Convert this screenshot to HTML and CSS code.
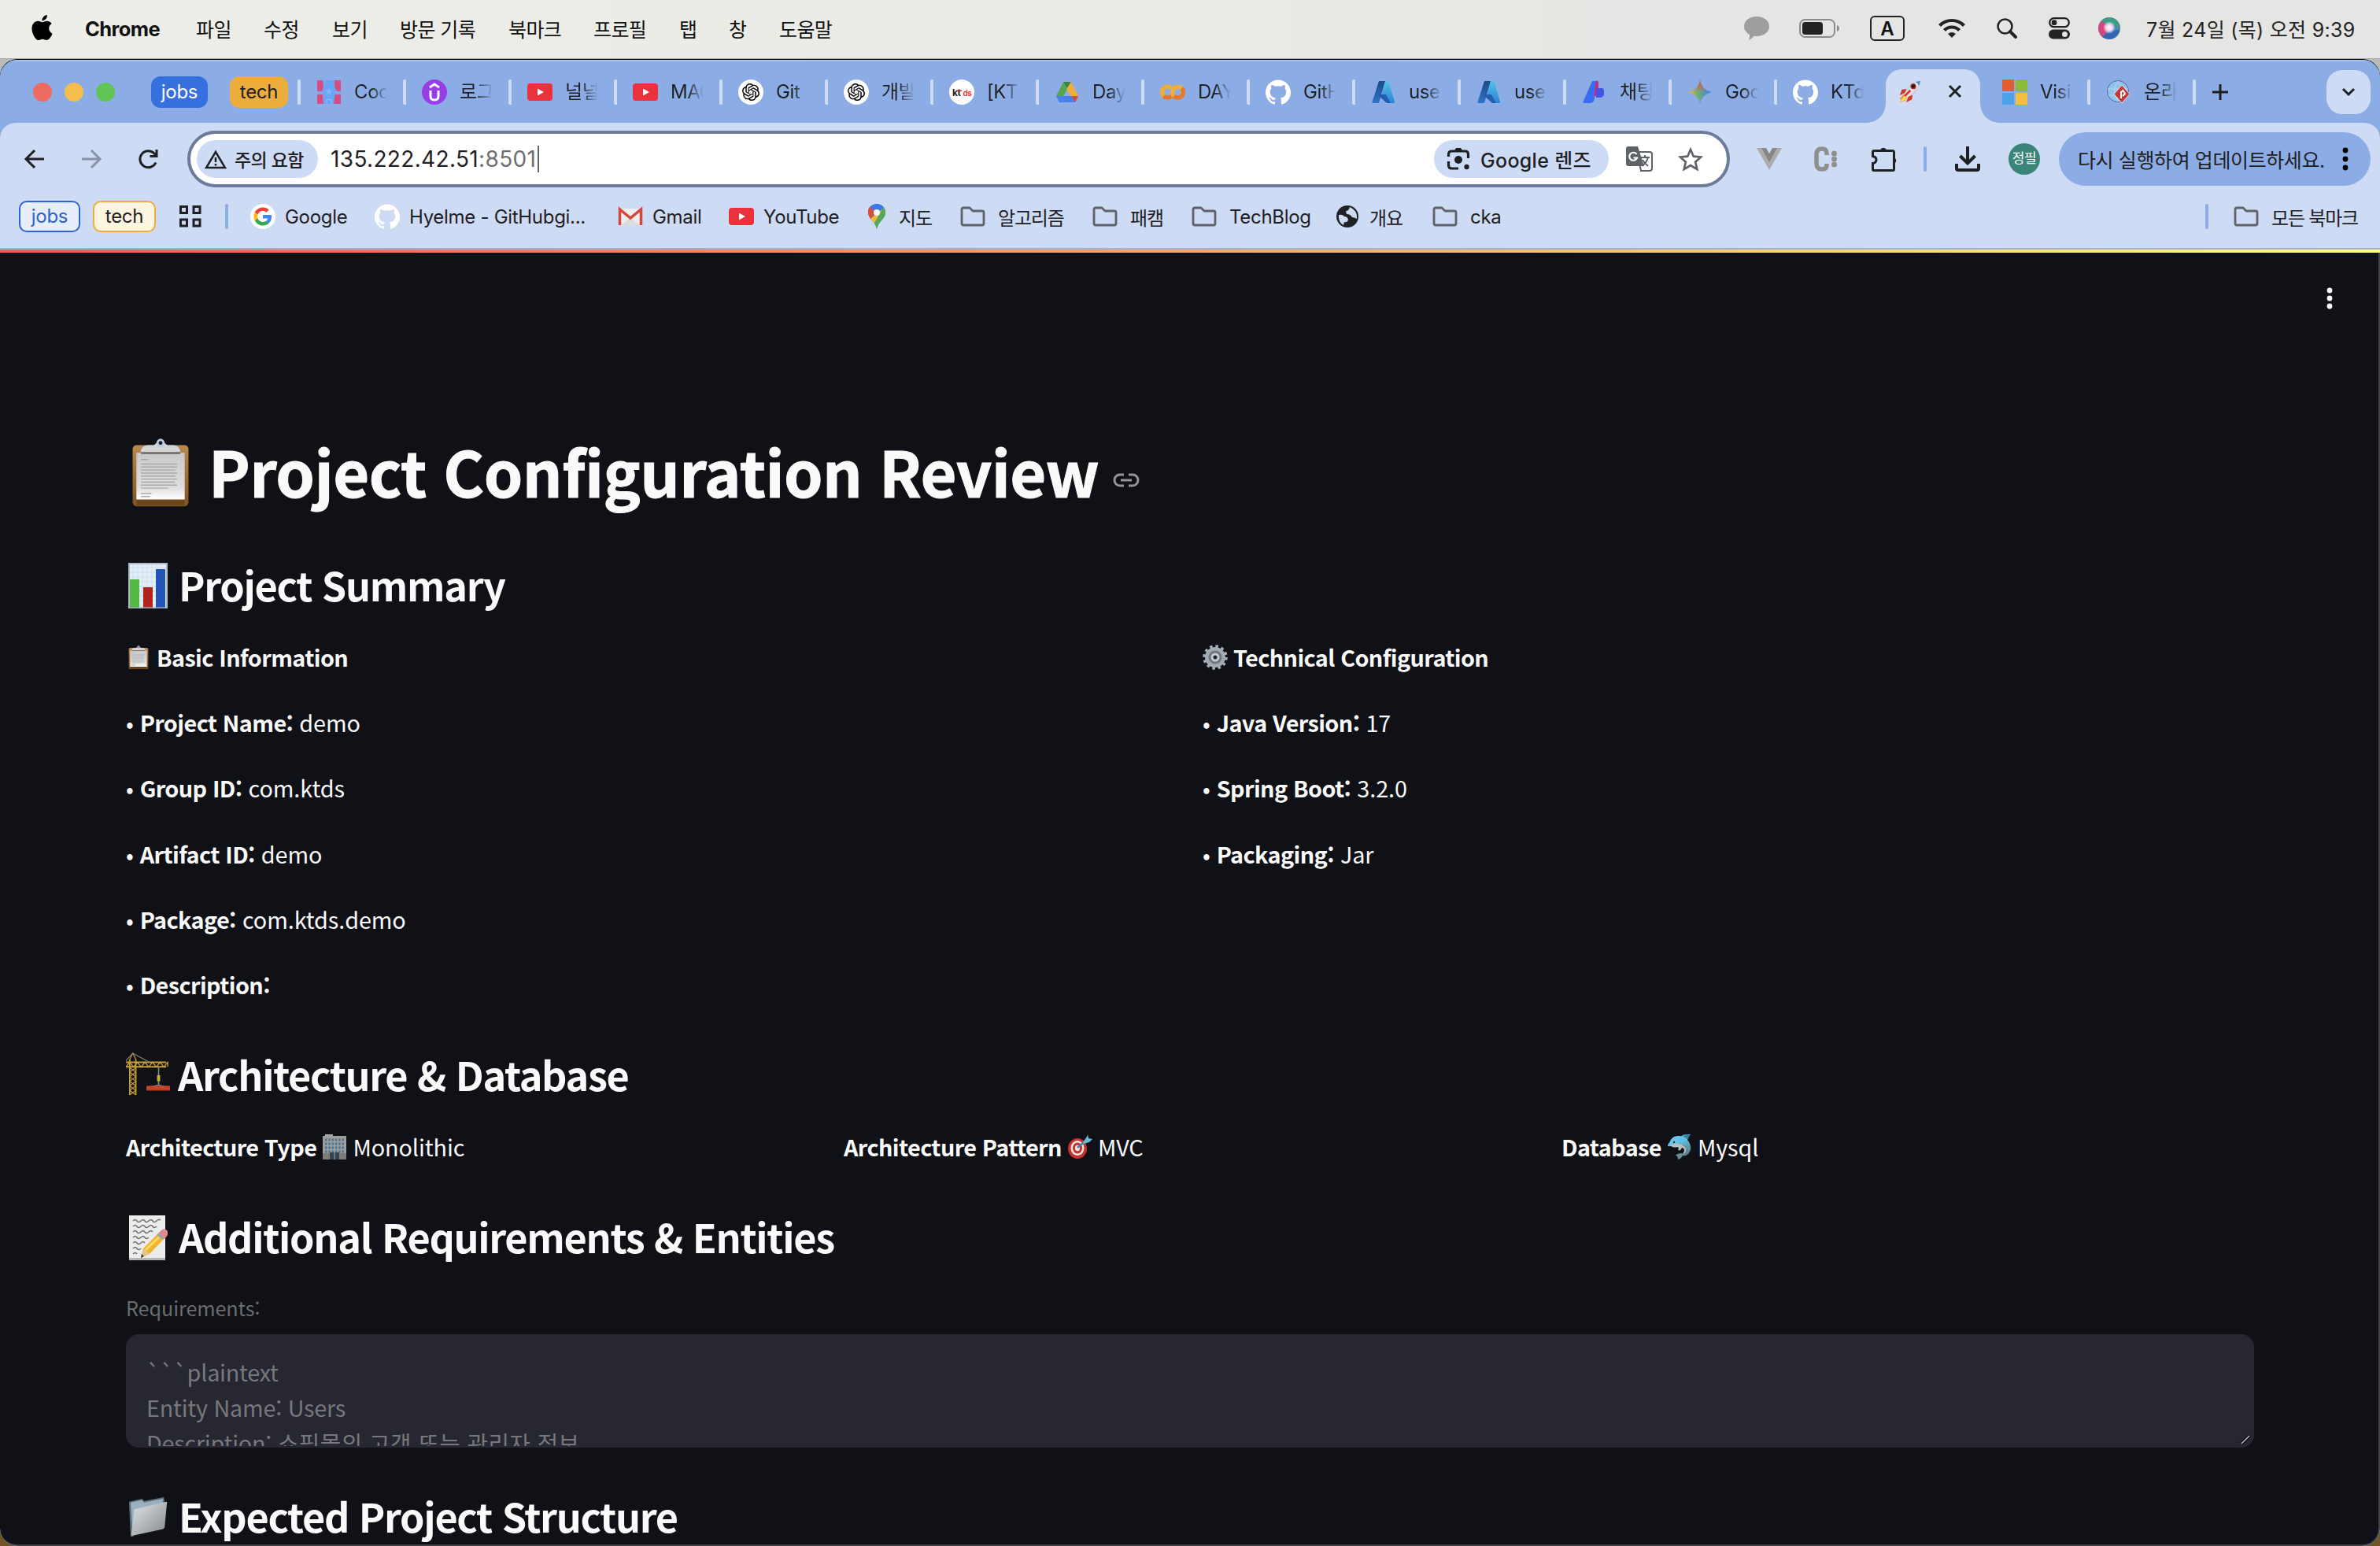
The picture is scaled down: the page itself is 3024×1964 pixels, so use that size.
FILE: index.html
```html
<!DOCTYPE html>
<html lang="ko">
<head>
<meta charset="utf-8">
<title>Project Configuration Review</title>
<link rel="stylesheet" href="styles.css">
</head>
<body>
<svg class="defs" aria-hidden="true">
  <defs>
    <linearGradient id="wood" x1="0" y1="0" x2="0" y2="1"><stop offset="0" stop-color="#b98a4b"/><stop offset="1" stop-color="#805424"/></linearGradient>
    <linearGradient id="paper" x1="0" y1="0" x2="0" y2="1"><stop offset="0" stop-color="#c9c9c9"/><stop offset=".75" stop-color="#dedede"/><stop offset="1" stop-color="#fff"/></linearGradient>
    <linearGradient id="folder" x1="0" y1="0" x2="1" y2="1"><stop offset="0" stop-color="#e2e5e7"/><stop offset="1" stop-color="#85898d"/></linearGradient>
    <linearGradient id="azure" x1="0" y1="0" x2="0" y2="1"><stop offset="0" stop-color="#4fc4e8"/><stop offset="1" stop-color="#2f7fd6"/></linearGradient>
    <linearGradient id="azureDark" x1="0" y1="0" x2="0" y2="1"><stop offset="0" stop-color="#1c4a86"/><stop offset="1" stop-color="#2f74c8"/></linearGradient>
    <linearGradient id="dolphin" x1="0" y1="0" x2=".6" y2="1"><stop offset="0" stop-color="#74d2f4"/><stop offset=".5" stop-color="#5fc0e6"/><stop offset="1" stop-color="#5d7f90"/></linearGradient>
    <radialGradient id="siri"><stop offset="0" stop-color="#fff"/><stop offset=".3" stop-color="#f0d4f0"/><stop offset=".6" stop-color="#fff" stop-opacity="0"/></radialGradient>
    <linearGradient id="gem" x1="0" y1="0" x2="1" y2="0"><stop offset="0" stop-color="#edbd3d"/><stop offset=".4" stop-color="#6fae72"/><stop offset="1" stop-color="#3c7df0"/></linearGradient>
    <linearGradient id="gemTop" x1="0" y1="0" x2="0" y2="1"><stop offset="0" stop-color="#ea4f3c"/><stop offset=".5" stop-color="#ea4f3c" stop-opacity="0"/></linearGradient>
    <linearGradient id="rocketBody" x1="0" y1="0" x2="1" y2="1"><stop offset="0" stop-color="#5596d8"/><stop offset=".5" stop-color="#eef3f7"/><stop offset="1" stop-color="#74828d"/></linearGradient>
  </defs>
  <symbol id="clipboard" viewBox="0 0 80 96">
    <rect x="3" y="12" width="74" height="81" rx="5" fill="url(#wood)"/>
    <rect x="8" y="84" width="64" height="8" fill="#6b451c"/>
    <rect x="8" y="22" width="64" height="62" fill="url(#paper)"/>
    <path d="M14 22v-3q1-6 9-7h8l5-4q4-4 8 0l5 4h8q8 1 9 7v3z" fill="#d3d5d8"/>
    <rect x="14" y="21" width="52" height="3" fill="#7b736c"/>
    <circle cx="40" cy="9" r="4" fill="#15202c" stroke="#b9cbdc" stroke-width="3"/>
    <path d="M14 31h10M14 37h48M14 41h48M14 45h46M14 49h48M14 53h46M14 57h48M14 61h45M14 65h48M14 69h36M14 76h14M14 80h12" stroke="#aaa" stroke-width="1.5"/>
  </symbol>
  <symbol id="chart" viewBox="0 0 50 58">
    <rect width="50" height="58" fill="#e3eef8"/>
    <path d="M0 6h50M0 12h50M0 18h50M0 24h50M0 30h50M0 36h50M0 42h50M0 48h50M0 54h50M6 0v58M12 0v58M18 0v58M24 0v58M30 0v58M36 0v58M42 0v58" stroke="#cddfed" stroke-width="1"/>
    <rect x="2" y="21" width="12" height="37" fill="#54b941"/><rect x="19" y="31" width="12" height="27" fill="#b3251c"/><rect x="35" y="8" width="12" height="50" fill="#2454b8"/>
    <rect x="1" y="1" width="48" height="56" fill="none" stroke="#9cabb8" stroke-width="1.5"/>
  </symbol>
  <symbol id="gear" viewBox="0 0 64 64">
    <circle cx="32" cy="32" r="28" fill="none" stroke="#a8b1ba" stroke-width="7" stroke-dasharray="7 7.66"/>
    <circle cx="32" cy="32" r="21" fill="none" stroke="#a2abb3" stroke-width="10"/>
    <circle cx="32" cy="32" r="17" fill="#70777e"/>
    <circle cx="32" cy="32" r="11" fill="#c3cad0"/><circle cx="32" cy="32" r="5" fill="#23272c"/>
  </symbol>
  <symbol id="crane" viewBox="0 0 58 56">
    <g fill="none" stroke="#c79e3a">
      <path d="M5 9v47M13 9v47" stroke-width="1.800"/>
      <path d="M5 20l8 6-8 6 8 6-8 6 8 6-8 6M13 20l-8 6 8 6-8 6 8 6-8 6 8 6M5 9l4-8 4 8" stroke-width="1.2"/>
      <path d="M0 13h53M0 19h53" stroke-width="2"/>
      <path d="M0 19l5-6 5 6 5-6 5 6 5-6 5 6 5-6 5 6 5-6 5 6 5-6v6" stroke-width="1.4"/>
    </g>
    <path d="M9 1L0 11M9 1l22 12" stroke="#82807a" stroke-width="1.2" fill="none"/>
    <path d="M43 20v12M43 38v5l-12 3M43 43l11 3" stroke="#8a8d90" stroke-width="1.6" fill="none"/>
    <rect x="41" y="30" width="4" height="8" fill="#c7b33b"/><rect x="27" y="44" width="31" height="6" fill="#c2452a"/><path d="M28 50h29" stroke="#7e2a1a"/>
  </symbol>
  <symbol id="building" viewBox="0 0 32 32">
    <rect x="4" y="0" width="10" height="4" fill="#a7a7a5"/><rect x="1" y="2" width="30" height="30" fill="#a09e9a"/>
    <path d="M4 7h24M4 12h24M4 17h24M4 22h24" stroke="#44739c" stroke-width="3" stroke-dasharray="2.5 1.8"/>
    <rect x="1" y="24" width="30" height="8" fill="#7d7c7a"/><rect x="10" y="23" width="12" height="9" fill="#344452"/><path d="M16 23v9" stroke="#98a6b2"/>
  </symbol>
  <symbol id="target" viewBox="0 0 32 32">
    <ellipse cx="13" cy="18" rx="12" ry="13" fill="#c7312e"/><ellipse cx="13" cy="17.5" rx="8.5" ry="9.5" fill="#f0e9e6"/><ellipse cx="13" cy="17.5" rx="6" ry="7" fill="#c7312e"/><ellipse cx="13" cy="17.5" rx="3" ry="3.8" fill="#f0e9e6"/>
    <path d="M13 17L26 6" stroke="#3b8ba0" stroke-width="2.5"/><path d="M20 10l5-7 1-3 1 5 5 1-4 4-7 2z" fill="#64bcd0"/>
  </symbol>
  <symbol id="dolphin-mark" viewBox="0 0 32 32">
    <path d="M1 15C1 12 3 11 4 9 6 4 11 1 18 2.500 21 0 26 0 30 0c-2 2-3 5-4 7 5 6 6 13 1 18-3 3-7 3-8 1 1-3 5-5 4-10-2-3-6-4-10-4-4 2-8 4-12 3z" fill="url(#dolphin)"/>
    <path d="M4 14c5-3 14-3 18 1 4 4 2 9-2 11 3-4 3-8-1-9-1 3-3 4-5 3 1-1 1-3 0-4-3 1-7 1-10-2z" fill="#b9bfbd"/>
    <path d="M19 24c-3 0-7 1-8 3 2 0 3 2 3 5 3-1 6-3 6-6z" fill="#6d8c9a"/><path d="M20 2q5-2 10-2-2 2-4 6z" fill="#2d7fa6"/>
    <circle cx="9" cy="10" r="1.2" fill="#0f2530"/>
  </symbol>
  <symbol id="memo" viewBox="0 0 50 58">
    <rect x="1" y="1" width="46" height="56" fill="#ececec"/><rect x="1" y="55" width="46" height="3" fill="#b5b5b5"/>
    <path d="M6 8q3-3 5 0t5 0 5 0 5 0 5 0 5 0 5-1M6 15q3-3 5 0t5 0 5 0 5 0 5 0 5 0M6 22q3-3 5 0t5 0 5 0 5 0 5 0M6 29q3-3 5 0t5 0 5 0 5 0M6 36q3-3 5 0t5 0 5 0M6 43q3-3 5 0t5 0M6 50q3-3 5 0" fill="none" stroke="#6f6f6f" stroke-width="1.5"/>
    <path d="M16 55l3-12 22-22 8 6-22 23z" fill="#efb52a"/><path d="M22 45l22-21" stroke="#fadb62" stroke-width="3"/>
    <path d="M16 55l3-12 8 7z" fill="#e5c393"/><path d="M16 55l1-5 3 3z" fill="#333"/><path d="M38 24l5-5q3-2 6 1t1 6l-4 5z" fill="#e08990"/><path d="M37 25l8 6" stroke="#9aa4aa" stroke-width="3"/>
  </symbol>
  <symbol id="files" viewBox="0 0 52 52">
    <path d="M1 6l17-4 3 3L47 0l1 6L6 52H3z" fill="#5e6f7d"/><path d="M3 7l15-3 3 3 25-5-1 9L10 17 6 48z" fill="#9db0bf"/>
    <path d="M8 16L50 6q2 0 1 2l-3 32-2 2L5 51q-1 0-1-2z" fill="url(#folder)"/>
  </symbol>
  <symbol id="rocket" viewBox="0 0 32 32">
    <path d="M12 12l-7 1-3 8 7-3zM20 20l-1 7-8 4 3-8z" fill="#d13a22"/>
    <path d="M8 19l-6 7 2 1-2 4 6-2 5-5z" fill="#f08b25"/><path d="M9 21l-4 5-2 4 5-2 4-4z" fill="#ffe25a"/>
    <path d="M31 1c-8 0-15 4-19 11l-4 8 4 4 8-4c8-5 11-12 11-19z" fill="url(#rocketBody)"/>
    <path d="M31 1l-7 1q3 2 5 6z" fill="#4b88ca"/><circle cx="21" cy="8.500" r="4" fill="#b52a22"/><circle cx="21" cy="8.500" r="2.300" fill="#1a1617"/><path d="M9 22l8-8" stroke="#d6392b" stroke-width="3"/>
  </symbol>
  <symbol id="github" viewBox="0 0 24 24"><path d="M12 .297c-6.63 0-12 5.373-12 12 0 5.303 3.438 9.8 8.205 11.385.6.113.82-.258.82-.577 0-.285-.01-1.04-.015-2.04-3.338.724-4.042-1.61-4.042-1.61C4.422 18.07 3.633 17.7 3.633 17.7c-1.087-.744.084-.729.084-.729 1.205.084 1.838 1.236 1.838 1.236 1.07 1.835 2.809 1.305 3.495.998.108-.776.417-1.305.76-1.605-2.665-.3-5.466-1.332-5.466-5.93 0-1.31.465-2.38 1.235-3.22-.135-.303-.54-1.523.105-3.176 0 0 1.005-.322 3.3 1.23.96-.267 1.98-.399 3-.405 1.02.006 2.04.138 3 .405 2.28-1.552 3.285-1.23 3.285-1.23.645 1.653.24 2.873.12 3.176.765.84 1.23 1.91 1.23 3.22 0 4.61-2.805 5.625-5.475 5.92.42.36.81 1.096.81 2.22 0 1.606-.015 2.896-.015 3.286 0 .315.21.69.825.57C20.565 22.092 24 17.592 24 12.297c0-6.627-5.373-12-12-12" fill="#fff"/></symbol>
  <symbol id="youtube" viewBox="0 0 32 32"><rect y="5" width="32" height="22" rx="4" fill="#ea323c"/><path d="M13 11.500v9l8-4.500z" fill="#fff"/></symbol>
  <symbol id="openai" viewBox="0 0 32 32"><circle cx="16" cy="16" r="16" fill="#fff"/><path transform="translate(5 5) scale(.917)" d="M22.2819 9.8211a5.9847 5.9847 0 0 0-.5157-4.9108 6.0462 6.0462 0 0 0-6.5098-2.9A6.0651 6.0651 0 0 0 4.9807 4.1818a5.9847 5.9847 0 0 0-3.9977 2.9 6.0462 6.0462 0 0 0 .7427 7.0966 5.98 5.98 0 0 0 .511 4.9107 6.051 6.051 0 0 0 6.5146 2.9001A5.9847 5.9847 0 0 0 13.2599 24a6.0557 6.0557 0 0 0 5.7718-4.2058 5.9894 5.9894 0 0 0 3.9977-2.9001 6.0557 6.0557 0 0 0-.7475-7.0729zm-9.022 12.6081a4.4755 4.4755 0 0 1-2.8764-1.0408l.1419-.0804 4.7783-2.7582a.7948.7948 0 0 0 .3927-.6813v-6.7369l2.02 1.1686a.071.071 0 0 1 .038.052v5.5826a4.504 4.504 0 0 1-4.4945 4.4944zm-9.6607-4.1254a4.4708 4.4708 0 0 1-.5346-3.0137l.142.0852 4.783 2.7582a.7712.7712 0 0 0 .7806 0l5.8428-3.3685v2.3324a.0804.0804 0 0 1-.0332.0615L9.74 19.9502a4.4992 4.4992 0 0 1-6.1408-1.6464zM2.3408 7.8956a4.485 4.485 0 0 1 2.3655-1.9728V11.6a.7664.7664 0 0 0 .3879.6765l5.8144 3.3543-2.0201 1.1685a.0757.0757 0 0 1-.071 0l-4.8303-2.7865A4.504 4.504 0 0 1 2.3408 7.872zm16.5963 3.8558L13.1038 8.364 15.1192 7.2a.0757.0757 0 0 1 .071 0l4.8303 2.7913a4.4944 4.4944 0 0 1-.6765 8.1042v-5.6772a.79.79 0 0 0-.407-.667zm2.0107-3.0231l-.142-.0852-4.7735-2.7818a.7759.7759 0 0 0-.7854 0L9.409 9.2297V6.8974a.0662.0662 0 0 1 .0284-.0615l4.8303-2.7866a4.4992 4.4992 0 0 1 6.6802 4.66zM8.3065 12.863l-2.02-1.1638a.0804.0804 0 0 1-.038-.0567V6.0742a4.4992 4.4992 0 0 1 7.3757-3.4537l-.142.0805L8.704 5.459a.7948.7948 0 0 0-.3927.6813zm1.0976-2.3654l2.602-1.4998 2.6069 1.4998v2.9994l-2.5974 1.4997-2.6067-1.4997Z"/></symbol>
  <symbol id="azure-mark" viewBox="0 0 32 32"><path d="M10 2h8L10 30H2q-1 0-.500-1.500z" fill="url(#azureDark)"/><path d="M18 2h3q1 0 1.500 1.500L30 28q.5 2-1.500 2H21l-7-12z" fill="url(#azure)"/><path d="M8 19h11l6 11h-5z" fill="#245fae"/></symbol>
  <symbol id="folder-mark" viewBox="0 0 32 28"><path d="M4 3h8l4 4h12q2 0 2 2v14q0 2-2 2H4q-2 0-2-2V5q0-2 2-2z" fill="none" stroke="#5f6368" stroke-width="2.800" stroke-linejoin="round"/></symbol>
</svg>

<header class="menubar">
  <nav class="menus">
    <svg width="27" height="32" viewBox="2 0 20 24"><path d="M12.152 6.896c-.948 0-2.415-1.078-3.96-1.04-2.04.027-3.91 1.183-4.961 3.014-2.117 3.675-.546 9.103 1.519 12.09 1.013 1.454 2.208 3.09 3.792 3.039 1.52-.065 2.09-.987 3.935-.987 1.831 0 2.35.987 3.96.948 1.637-.026 2.676-1.48 3.676-2.948 1.156-1.688 1.636-3.325 1.662-3.415-.039-.013-3.182-1.221-3.22-4.857-.026-3.04 2.48-4.494 2.597-4.559-1.429-2.09-3.623-2.324-4.39-2.376-2-.156-3.675 1.09-4.61 1.09zM15.53 3.83c.843-1.012 1.4-2.427 1.245-3.83-1.207.052-2.662.805-3.532 1.818-.78.896-1.454 2.338-1.273 3.714 1.338.104 2.715-.688 3.559-1.701"/></svg>
    <b>Chrome</b><span>파일</span><span>수정</span><span>보기</span><span>방문 기록</span><span>북마크</span><span>프로필</span><span>탭</span><span>창</span><span>도움말</span>
  </nav>
  <div class="status">
    <svg width="32" height="32" viewBox="0 0 32 32"><path d="M16 1c9 0 16 5 16 12.500S25 26 16 26q-2 0-3.500-.3Q10 29 6 31q1.500-4 1-7Q0 20 0 13.500C0 6 7 1 16 1z" fill="#9e9e9e"/></svg>
    <svg width="52" height="26" viewBox="0 0 52 26"><rect x="1" y="2" width="44" height="22" rx="6.500" fill="none" stroke="#8b8b8a" stroke-width="2"/><rect x="4" y="5" width="26" height="16" rx="3.500" fill="#232323"/><path d="M48 9q3 1 3 4t-3 4z" fill="#8b8b8a"/></svg>
    <span class="ime">A</span>
    <svg width="34" height="26" viewBox="0 0 34 26" fill="none" stroke="#232323" stroke-width="4.200"><path d="M1.500 9.500Q8 3 17 3t15.500 6.500M7.500 15.500Q11 11.500 17 11.500t9.500 4"/><path d="M17 25l-5-5q5-4 10 0z" fill="#232323" stroke="none"/></svg>
    <svg width="26" height="26" viewBox="0 0 26 26" fill="none" stroke="#232323"><circle cx="10.500" cy="10.500" r="9" stroke-width="2.600"/><path d="M17 17l7 7" stroke-width="4" stroke-linecap="round"/></svg>
    <svg width="27" height="28" viewBox="0 0 27 28"><rect x="1.200" y="1.200" width="24.600" height="11" rx="5.500" fill="none" stroke="#232323" stroke-width="2.300"/><circle cx="7" cy="6.700" r="3.400" fill="#232323"/><rect y="15.500" width="27" height="12" rx="6" fill="#232323"/><circle cx="20.500" cy="21.500" r="3.500" fill="#e5e5e3"/></svg>
    <svg width="28" height="28" viewBox="0 0 28 28"><circle cx="14" cy="14" r="14" fill="#4a86a8"/><path d="M3 6Q9-1 17 .500q9 2 11 13-6-5-12-3T3 6z" fill="#3f9c83"/><path d="M1 18Q-1 9 4 5q9 4 9 10-4 7-8 10-3-3-4-7z" fill="#d5467c"/><path d="M5 25q8-9 22-9-2 8-9 11-7 2-13-2z" fill="#3166b4"/><circle cx="14" cy="13" r="13" fill="url(#siri)"/></svg>
    <time>7월 24일 (목) 오전 9:39</time>
  </div>
</header>

<div class="window">
  <div class="tabstrip">
    <div class="lights"><i class="red"></i><i class="amber"></i><i class="green"></i></div>
    <span class="group group-jobs">jobs</span><span class="group group-tech">tech</span>
    <div class="tabs">
      <div class="tab"><svg viewBox="0 0 32 32"><path d="M1 1h30v30H1z" fill="#7da7ee"/><path d="M1 1h7q2 10-1 14H1zM31 1h-8q-1 10 3 14h5zM1 19h7l1 12H1zM31 19h-8l-1 12h9z" fill="#d64d82"/><path d="M11 1h10l3 15-2 15H10L8 16z" fill="#67a5f6"/><path d="M16 10l1.500 3.500 3.500.5-3 2 1 4-3-2-3 2 1-4-3-2 3.500-.5z" fill="#8ab5ee"/><path d="M13 31v-5q3-2 6 0v5" fill="none" stroke="#9bc0f5"/></svg><span>Coo</span></div>
      <div class="tab"><svg viewBox="0 0 32 32"><circle cx="16" cy="16" r="16" fill="#963ee4"/><path d="M10 10l6-4 6 4M11 14v7q0 5 5 5t5-5v-7" fill="none" stroke="#fff" stroke-width="3"/></svg><span>로그</span></div>
      <div class="tab"><svg><use href="#youtube"/></svg><span>널널</span></div>
      <div class="tab"><svg><use href="#youtube"/></svg><span>MAC</span></div>
      <div class="tab"><svg><use href="#openai"/></svg><span>Git</span></div>
      <div class="tab"><svg><use href="#openai"/></svg><span>개발</span></div>
      <div class="tab"><svg class="ktds" viewBox="0 0 32 32"><circle cx="16" cy="16" r="16" fill="#fff"/><text x="4" y="20.500" font-size="12" font-weight="700" fill="#222">kt</text><text x="17.500" y="20.500" font-size="10" font-weight="600" fill="#e0302f">ds</text><path d="M9 14h7" stroke="#e0302f" stroke-width="1.500"/></svg><span>[KT</span></div>
      <div class="tab"><svg viewBox="0 0 32 32"><path d="M11 3h10l-5 9z" fill="#3a8443"/><path d="M11 3l5 9-9 17-5-8z" fill="#55a553"/><path d="M21 3l9 18H20l-5-9z" fill="#edae3b"/><path d="M2 21h28l-4 8H6z" fill="#4a80ec"/><path d="M22 21h8l-4 8z" fill="#dc4a36"/></svg><span>Day</span></div>
      <div class="tab"><svg viewBox="0 0 32 32" fill="none" stroke-width="5.500"><path d="M14.500 11a7 7 0 1 0 0 10" stroke="#edae3b"/><path d="M4.500 21a7 7 0 0 0 10 0" stroke="#de7a32"/><circle cx="22.500" cy="16" r="6.700" stroke="#edae3b"/><path d="M17.500 21a7 7 0 0 0 10-10" stroke="#de7a32"/></svg><span>DAY</span></div>
      <div class="tab"><svg><use href="#github"/></svg><span>GitH</span></div>
      <div class="tab"><svg><use href="#azure-mark"/></svg><span>use</span></div>
      <div class="tab"><svg><use href="#azure-mark"/></svg><span>use</span></div>
      <div class="tab"><svg viewBox="0 0 32 32"><path d="M17 2q4-2 4 3v15l-6 2z" fill="#b8307e"/><path d="M13 2h5q-3 12-2 22-1 6-6 6H2q-1 0 0-3z" fill="#3a6cf2"/><path d="M19 11h6q3 0 3 4v4q-1 4-6 4h-4z" fill="#3f55e8"/></svg><span>채팅</span></div>
      <div class="tab"><svg viewBox="0 0 32 32"><path d="M16 1q2 12 15 15-13 3-15 15Q14 19 1 16 14 13 16 1z" fill="url(#gem)"/><path d="M16 1q2 12 15 15-13 3-15 15Q14 19 1 16 14 13 16 1z" fill="url(#gemTop)"/></svg><span>Goo</span></div>
      <div class="tab"><svg><use href="#github"/></svg><span>KTd</span></div>
      <div class="tab active"><svg class="rocket"><use href="#rocket"/></svg><svg class="close" viewBox="0 0 18 18"><path d="M2 2l14 14M16 2L2 16" stroke="#1f2023" stroke-width="3"/></svg></div>
      <div class="tab plain"><svg viewBox="0 0 32 32"><path d="M0 0h15v15H0z" fill="#e25d34"/><path d="M17 0h15v15H17z" fill="#8ebb35"/><path d="M0 17h15v15H0z" fill="#4ba2eb"/><path d="M17 17h15v15H17z" fill="#f5bd42"/></svg><span>Visi</span></div>
      <div class="tab"><svg viewBox="0 0 32 32"><circle cx="15" cy="15" r="13.500" fill="#8fc2ec" stroke="#4c6f9b"/><path d="M2 12h26M3 20h24M15 2q-9 13 0 26M15 2q9 13 0 26" fill="none" stroke="#b5d6f3"/><path d="M20 7l10 11.500L20 30 10 18.500z" fill="#bf3a38" stroke="#f1e4e6"/><path d="M19 24v-8l2.500-2 2.500 4-3 3" fill="none" stroke="#fff" stroke-width="2"/></svg><span>온라</span></div>
      <div class="tab end"></div>
    </div>
    <svg class="plus" width="22" height="22" viewBox="0 0 22 22"><path d="M11 1v20M1 11h20" stroke="#1f2023" stroke-width="3"/></svg>
    <div class="tabsearch"><svg width="18" height="12" viewBox="0 0 18 12"><path d="M2 2l7 7 7-7" fill="none" stroke="#1f2023" stroke-width="3"/></svg></div>
  </div>

  <div class="toolbar">
    <div class="nav">
      <svg viewBox="0 0 32 32"><path d="M28 16H6M16 5L5 16l11 11" fill="none" stroke="#1f2023" stroke-width="3"/></svg>
      <svg viewBox="0 0 32 32"><path d="M4 16h22M16 5l11 11-11 11" fill="none" stroke="#8792a6" stroke-width="3"/></svg>
      <svg viewBox="0 0 32 32"><path d="M26 20.500A10.500 10.500 0 1 1 24 9l3 3M27 4v8.500h-8.500" fill="none" stroke="#1f2023" stroke-width="3"/></svg>
    </div>
    <div class="omnibox">
      <span class="warn"><svg width="28" height="25" viewBox="0 0 28 25"><path d="M14 3L26 23H2z" fill="none" stroke="#1f2023" stroke-width="2.500"/><path d="M14 10v6M14 18v2.500" stroke="#1f2023" stroke-width="2.500"/></svg><b>주의 요함</b></span>
      <span class="url">135.222.42.51<em>:8501</em></span><i class="caret"></i>
      <span class="lens"><svg width="30" height="30" viewBox="0 0 30 30" fill="none" stroke="#1f2023" stroke-width="3.200"><path d="M2.500 12V9q0-4 4-4h17q4 0 4 4v5M2.500 18v5q0 4 4 4H15"/><circle cx="15" cy="16" r="5" fill="#1f2023" stroke="none"/><circle cx="25.500" cy="25" r="3.200" fill="#1f2023" stroke="none"/><path d="M10 4l2-3h6l2 3z" fill="#1f2023" stroke="none"/></svg><b>Google 렌즈</b></span>
      <svg class="translate" width="34" height="34" viewBox="0 0 34 34"><path d="M14 8h16q3 0 3 3v18q0 3-3 3H19z" fill="#fff" stroke="#5f6368" stroke-width="2"/><path d="M3 1h12l8 25H3q-3 0-3-3V4q0-3 3-3z" fill="#5f6368"/><path d="M13.500 11A5 5 0 1 0 14 15.500H9.500" fill="none" stroke="#fff" stroke-width="2.200"/><path d="M18 15h12M24 12v3M28 15q-2 7-8 11M21 18q3 5 7 8" stroke="#5f6368" stroke-width="2" fill="none"/></svg>
      <svg class="star" width="32" height="30" viewBox="0 0 32 30"><path d="M16 3l3.800 8.700 9.400.8-7.100 6.200 2.200 9.300L16 23l-8.300 5 2.200-9.300-7.100-6.200 9.400-.8z" fill="none" stroke="#5f6368" stroke-width="2.700"/></svg>
    </div>
    <div class="extensions">
      <svg width="32" height="28" viewBox="0 0 32 28"><path d="M0 0h7l9 16 9-16h7L16 28z" fill="#acacac"/><path d="M6 0h6l4 7 4-7h6L16 18z" fill="#878787"/></svg>
      <svg width="30" height="32" viewBox="0 0 30 32"><path d="M16 11V9q0-6-6-6-7 0-7 7v12q0 7 7 7 6 0 6-5v-2" fill="none" stroke="#8f8f8f" stroke-width="5.500"/><g fill="#8f8f8f"><circle cx="25.500" cy="9" r="3.500"/><circle cx="25.500" cy="16" r="3.500"/><circle cx="25.500" cy="23" r="3.500"/></g></svg>
      <svg width="34" height="34" viewBox="0 0 34 34"><path d="M4.500 6.500h23q2 0 2 2V30q0 1.500-1.500 1.500H4q-1.500 0-1.500-1.500v-7.500c6-1 6-8 0-9V8q0-1.500 2-1.500z" fill="none" stroke="#1f2023" stroke-width="3"/><path d="M12 6a4.300 4.300 0 0 1 8 0zM29 15a4.300 4.300 0 0 1 0 8z" fill="#1f2023" stroke="#1f2023"/></svg>
      <i class="divider"></i>
      <svg width="32" height="32" viewBox="0 0 32 32"><path d="M16 0v19M6.500 12L16 21.500 25.500 12M2 22v6q0 2 2 2h24q2 0 2-2v-6" fill="none" stroke="#1f2023" stroke-width="4"/></svg>
      <span class="avatar">정필</span>
    </div>
    <div class="relaunch"><span>다시 실행하여 업데이트하세요.</span><svg width="8" height="30" viewBox="0 0 8 30"><circle cx="4" cy="4" r="3.400"/><circle cx="4" cy="15" r="3.400"/><circle cx="4" cy="26" r="3.400"/></svg></div>
  </div>

  <div class="bookmarks">
    <span class="chip chip-jobs">jobs</span><span class="chip chip-tech">tech</span>
    <svg class="apps" width="30" height="30" viewBox="0 0 30 30" fill="none" stroke="#1f2023" stroke-width="3"><path d="M2.500 2.500h8v8h-8zM19 2.500h8v8h-8zM2.500 19h8v8h-8zM19 19h8v8h-8z"/></svg>
    <i class="divider"></i>
    <div class="links">
      <a><svg viewBox="0 0 32 32"><circle cx="16" cy="16" r="16" fill="#fff"/><g transform="translate(4.500 4.500) scale(.48)"><path fill="#ea4335" d="M24 9.500c3.540 0 6.710 1.220 9.210 3.600l6.850-6.850C35.900 2.380 30.470 0 24 0 14.620 0 6.510 5.380 2.560 13.220l7.980 6.190C12.430 13.720 17.740 9.500 24 9.500z"/><path fill="#4285f4" d="M46.980 24.550c0-1.570-.15-3.090-.38-4.550H24v9.020h12.940c-.58 2.960-2.260 5.480-4.780 7.180l7.730 6c4.510-4.180 7.090-10.360 7.090-17.650z"/><path fill="#fbbc05" d="M10.530 28.590c-.48-1.450-.76-2.990-.76-4.590s.27-3.140.76-4.590l-7.980-6.190C.92 16.460 0 20.120 0 24c0 3.880.92 7.540 2.560 10.780l7.970-6.190z"/><path fill="#34a853" d="M24 48c6.480 0 11.930-2.130 15.890-5.810l-7.730-6c-2.150 1.450-4.920 2.300-8.160 2.300-6.260 0-11.570-4.220-13.470-9.910l-7.980 6.190C6.510 42.620 14.620 48 24 48z"/></g></svg>Google</a>
      <a><svg><use href="#github"/></svg>Hyelme - GitHubgi...</a>
      <a><svg viewBox="0 0 32 32"><path d="M2 6h28v21H2z" fill="#eee"/><path d="M4 27l12-9 12 9z" fill="#dcdcdc"/><path d="M2.500 27V7L16 18 29.500 7v20" fill="none" stroke="#d0493c" stroke-width="3.500"/></svg>Gmail</a>
      <a><svg><use href="#youtube"/></svg>YouTube</a>
      <a class="ko"><svg viewBox="0 0 32 32"><path d="M16 0q11 1 11 11c0 8-9 11-11 21C14 22 5 19 5 11Q5 1 16 0z" fill="#55a859"/><path d="M7 4Q11 0 16 0q6 0 9 5l-9 8z" fill="#3e78e6"/><path d="M7 4l8 7-7 8q-3-4-3-8 0-5 2-7z" fill="#dc4a38"/><path d="M8 19L24 6l-5 12-6 7z" fill="#f0b93b"/><path d="M24 5q3 2 3 6c0 8-9 11-11 21-1-4-2-6-3-8z" fill="#55a859"/><circle cx="16" cy="11" r="4" fill="#fff"/></svg>지도</a>
      <a class="dir ko"><svg><use href="#folder-mark"/></svg>알고리즘</a>
      <a class="dir ko"><svg><use href="#folder-mark"/></svg>패캠</a>
      <a class="dir"><svg><use href="#folder-mark"/></svg>TechBlog</a>
      <a class="ko"><svg viewBox="0 0 32 32"><circle cx="16" cy="16" r="14" fill="#202124"/><path d="M5 14q5-1 7 2 4 0 5 4-1 4-5 3l-1 4q-7-4-6-13zM19 4q-1 5-5 5l1 4q5 0 7 4 3 0 6 2 1-11-9-15z" fill="#cedbf5"/></svg>개요</a>
      <a class="dir"><svg><use href="#folder-mark"/></svg>cka</a>
    </div>
    <div class="all"><i class="divider"></i><a class="dir ko"><svg><use href="#folder-mark"/></svg>모든 북마크</a></div>
  </div>

  <main class="page">
    <svg class="kebab" width="8" height="28" viewBox="0 0 8 28" fill="#fafafa"><circle cx="4" cy="4" r="3.400"/><circle cx="4" cy="14" r="3.400"/><circle cx="4" cy="24" r="3.400"/></svg>
    <h1><svg class="emoji"><use href="#clipboard"/></svg><span>Project Configuration Review</span><svg class="anchor" width="34" height="18" viewBox="0 0 34 18"><path d="M14 2H9a7 7 0 0 0 0 14h5M20 2h5a7 7 0 0 1 0 14h-5M10 9h14" fill="none" stroke="#94959a" stroke-width="3"/></svg></h1>
    <h3 class="summary"><svg class="emoji"><use href="#chart"/></svg><span>Project Summary</span></h3>
    <div class="two">
      <section>
        <p><svg class="emoji clip"><use href="#clipboard"/></svg><b>Basic Information</b></p>
        <p>• <b>Project Name:</b> demo</p>
        <p>• <b>Group ID:</b> com.ktds</p>
        <p>• <b>Artifact ID:</b> demo</p>
        <p>• <b>Package:</b> com.ktds.demo</p>
        <p>• <b>Description:</b></p>
      </section>
      <section>
        <p><svg class="emoji cog"><use href="#gear"/></svg><b>Technical Configuration</b></p>
        <p>• <b>Java Version:</b> 17</p>
        <p>• <b>Spring Boot:</b> 3.2.0</p>
        <p>• <b>Packaging:</b> Jar</p>
      </section>
    </div>
    <h3 class="arch"><svg class="emoji crane"><use href="#crane"/></svg><span>Architecture &amp; Database</span></h3>
    <div class="three">
      <p><b>Architecture Type</b><svg class="emoji"><use href="#building"/></svg>Monolithic</p>
      <p><b>Architecture Pattern</b><svg class="emoji"><use href="#target"/></svg>MVC</p>
      <p><b>Database</b><svg class="emoji"><use href="#dolphin-mark"/></svg>Mysql</p>
    </div>
    <h3 class="reqs"><svg class="emoji"><use href="#memo"/></svg><span>Additional Requirements &amp; Entities</span></h3>
    <div class="label">Requirements:</div>
    <div class="textarea"><div class="content">```plaintext
Entity Name: Users
Description: <span class="ko">쇼핑몰의 고객 또는 관리자 정보</span></div><svg class="grip" width="14" height="14" viewBox="0 0 14 14"><path d="M2 12L12 2" stroke="#0a0a0c" stroke-width="4"/><path d="M2 12L12 2" stroke="#c8c8ca" stroke-width="1.500"/></svg></div>
    <h3 class="tree"><svg class="emoji"><use href="#files"/></svg><span>Expected Project Structure</span></h3>
  </main>
</div>
</body>
</html>
```
FILE: styles.css
```css
* { box-sizing: border-box; }

body {
  margin: 0;
  width: 3024px;
  height: 1964px;
  overflow: hidden;
  display: flex;
  flex-direction: column;
  background: linear-gradient(#b9bcbc 0 50%, #6f5426 50%);
  font-family: Inter, "Noto Sans CJK KR", sans-serif;
  color: #1f2023;
}

svg { display: block; flex: none; }
.defs { position: absolute; width: 0; height: 0; }
i, em { font-style: normal; display: inline-block; }

/* macOS menu bar */
.menubar {
  height: 75px;
  flex: none;
  display: flex;
  justify-content: space-between;
  padding: 0 32px 2px 40px;
  background: linear-gradient(90deg, #eeeee9, #ebebe6 45%, #e5e5e4 75%, #e5e5e4);
  border-bottom: 1px solid #a6a6a4;
  font-size: 25px;
  color: #111;
}
.menus {
  display: grid;
  grid-template-columns: 68px 141px 86px 87px 86px 138px 108px 109px 63px 64px auto;
  align-items: center;
  white-space: nowrap;
}
.menus span { letter-spacing: -0.6px; }
.menus svg { position: relative; top: -1px; }
.menus b { font-size: 25.500px; letter-spacing: -0.6px; }
.status {
  display: grid;
  grid-template-columns: 70px 90px 87px 74px 66px 63px 61px 265px;
  align-items: center;
}
.status time { white-space: nowrap; letter-spacing: 0.3px; color: #232323; }
.ime {
  width: 44px;
  height: 32px;
  border: 2px solid #232323;
  border-radius: 6px;
  font-size: 24px;
  font-weight: 600;
  line-height: 29px;
  text-align: center;
}

/* browser window */
.window {
  flex: 1;
  min-height: 0;
  display: flex;
  flex-direction: column;
  overflow: hidden;
  border-radius: 22px;
  border-top: 1px solid #000;
  background: #8cace5;
}
.tabstrip {
  height: 80px;
  flex: none;
  display: flex;
  align-items: center;
  border-top: 2px solid #a9c1ef;
  padding: 0 12px 0 42px;
}
.lights { display: flex; gap: 16px; width: 150px; }
.lights i { width: 24px; height: 24px; border-radius: 50%; }
.red { background: #ed6b5f; }
.amber { background: #f4be4f; }
.green { background: #61c555; }
.group {
  height: 40px;
  border-radius: 12px;
  font-size: 24px;
  line-height: 39px;
  text-align: center;
  letter-spacing: -0.3px;
}
.group-jobs { width: 72px; background: #3670de; color: #fff; }
.group-tech { width: 74px; margin-left: 28px; background: #ecad3c; }
.tabs { display: flex; align-items: center; height: 78px; margin-left: 12px; }
.tab {
  width: 134px;
  height: 32px;
  flex: none;
  display: flex;
  align-items: center;
  gap: 16px;
  padding-left: 20px;
  border-left: 4px solid #cedbf5;
  border-radius: 2px;
}
.tab svg { width: 32px; height: 32px; }
.tab span {
  width: 42px;
  overflow: hidden;
  white-space: nowrap;
  font-size: 24px;
  line-height: 34px;
  letter-spacing: -0.4px;
  -webkit-mask-image: linear-gradient(90deg, #000 50%, transparent);
  mask-image: linear-gradient(90deg, #000 50%, transparent);
}
.tab.plain { border-color: transparent; width: 136px; padding-left: 24px; }
.tab.end { width: 4px; padding: 0; }
.tab.active {
  align-self: flex-end;
  width: 120px;
  height: 68px;
  margin: 0 0 0 8px;
  border: 0;
  border-radius: 20px 20px 0 0;
  background: #cedbf5;
  padding: 0 0 12px 16px;
  gap: 34px;
  position: relative;
}
.tab.active .rocket { width: 29px; height: 29px; }
.tab.active .close { width: 18px; height: 18px; }
.tab.active::before, .tab.active::after {
  content: "";
  position: absolute;
  bottom: 0;
  width: 24px;
  height: 24px;
}
.tab.active::before { left: -24px; background: radial-gradient(circle at 0 0, transparent 23.500px, #cedbf5 24px); }
.tab.active::after { right: -24px; background: radial-gradient(circle at 100% 0, transparent 23.500px, #cedbf5 24px); }
.ktds text { font-family: Inter, sans-serif; letter-spacing: -0.5px; }
.plus { margin-left: 20px; }
.tabsearch {
  width: 56px;
  height: 56px;
  margin-left: auto;
  border-radius: 20px;
  background: #cedbf5;
  display: grid;
  place-items: center;
}

.toolbar {
  height: 92px;
  flex: none;
  display: flex;
  align-items: center;
  padding: 0 12px 0 28px;
  background: #cedbf5;
  border-radius: 20px 20px 0 0;
}
.nav { display: flex; gap: 40px; width: 210px; }
.nav svg { width: 32px; height: 32px; }
.omnibox {
  width: 1960px;
  height: 72px;
  flex: none;
  display: flex;
  align-items: center;
  border: 4px solid #6c7b9a;
  border-radius: 36px;
  background: #fff;
  padding: 0 30px 0 8px;
}
.warn, .lens {
  height: 48px;
  border-radius: 24px;
  background: #cedbf5;
  display: flex;
  align-items: center;
  white-space: nowrap;
}
.warn { width: 154px; padding-left: 10px; gap: 10px; }
.warn b { font-size: 23px; font-weight: 500; letter-spacing: -0.6px; }
.url { margin-left: 16px; font-size: 28px; letter-spacing: 0.35px; }
.url em { color: #6d6f73; }
.caret { width: 2px; height: 34px; background: #5f6368; margin-left: 2px; }
.lens { width: 222px; margin-left: auto; padding-left: 16px; gap: 13px; }
.lens b { font-size: 25px; font-weight: 500; letter-spacing: 0.3px; }
.translate { margin-left: 22px; }
.star { margin-left: 32px; }
.extensions {
  display: grid;
  grid-template-columns: 73px 72px 67px 40px 68px 40px;
  align-items: center;
  margin-left: 34px;
}
.divider { width: 4px; height: 32px; border-radius: 2px; background: #8cace5; }
.avatar {
  width: 40px;
  height: 40px;
  border-radius: 50%;
  background: #3b8578;
  color: #fff;
  font-size: 17px;
  line-height: 39px;
  text-align: center;
  letter-spacing: -0.5px;
}
.relaunch {
  width: 396px;
  height: 68px;
  margin-left: auto;
  border-radius: 34px;
  background: #8cace5;
  display: flex;
  align-items: center;
  justify-content: space-between;
  padding: 0 28px 0 24px;
  font-size: 25px;
  letter-spacing: -0.4px;
  white-space: nowrap;
}

.bookmarks {
  height: 70px;
  flex: none;
  display: flex;
  align-items: center;
  padding: 0 28px 12px 24px;
  margin-top: -1px;
  background: #cedbf5;
  border-bottom: 2px solid #a3b0cb;
  font-size: 24px;
  letter-spacing: -0.3px;
}
.chip { height: 40px; border: 2px solid; border-radius: 10px; line-height: 35px; text-align: center; }
.chip-jobs { width: 78px; border-color: #2f62cf; color: #2f62cf; background: #e7eefb; }
.chip-tech { width: 80px; margin-left: 16px; border-color: #ecad3c; background: #fcf5df; }
.apps { margin: 0 29px; }
.bookmarks .apps + .divider { margin-right: 28px; }
.links {
  display: grid;
  grid-template-columns: 158px 309px 141px 172px 122px 168px 126px 182px 124px auto;
}
.bookmarks a { display: flex; align-items: center; gap: 12px; white-space: nowrap; }
.bookmarks a svg { width: 32px; height: 32px; }
.bookmarks a.dir { gap: 16px; }
.bookmarks a.ko { letter-spacing: -1.2px; }
.all { display: flex; align-items: center; gap: 32px; margin-left: auto; }

/* application page */
.page {
  position: relative;
  flex: 1;
  min-height: 0;
  padding: 227.800px 158px 0 160px;
  background: #0f1116;
  border: solid #424347;
  border-width: 0 2px 2px 0;
  border-radius: 0 0 22px 22px;
  color: #fafafa;
  font-family: "Noto Sans CJK KR", sans-serif;
  font-size: 28.800px;
  letter-spacing: -0.1px;
}
.page::before {
  content: "";
  position: absolute;
  inset: 0 -2px auto 0;
  height: 4px;
  background: linear-gradient(90deg, #ed5b56, #f0976b 40%, #f6c679 70%, #fdfd86);
}
.kebab { position: absolute; top: 48px; right: 58px; }
h1, h3, p { margin: 0; white-space: nowrap; }
h1, h3 { display: flex; align-items: center; font-weight: 700; }
h1 {
  height: 105.600px;
  font-size: 79.300px;
  line-height: 105.600px;
  letter-spacing: -0.57px;
  -webkit-text-stroke: 1px #fafafa;
}
h1 .emoji { width: 80px; height: 92px; margin: 4px 21px 0 4px; -webkit-text-stroke: 0; }
h1 .anchor { margin: 24px 0 0 18px; }
h3 { height: 67.200px; font-size: 50.400px; line-height: 67.200px; letter-spacing: -1.33px; }
h3 .emoji { width: 50px; height: 58px; margin: 4px 14px 0 3px; }
h3 .emoji.crane { width: 56px; height: 54px; margin: 0 10px 0 0; }
.summary { margin-top: 58.200px; }
.two { display: grid; grid-template-columns: 1fr 1fr; gap: 32px; height: 467.200px; margin-top: 33.200px; }
.two section { display: flex; flex-direction: column; gap: 32px; }
p { line-height: 51.200px; height: 51.200px; }
p b { letter-spacing: -0.6px; }
p .emoji { display: inline-block; width: 32px; height: 32px; margin: 0 7px; vertical-align: -4px; }
p .clip { margin: 0 7px 0 0; }
p .cog { margin: 0 7px 0 0; }
.arch { margin-top: 54.400px; }
.three { display: grid; grid-template-columns: repeat(3, 1fr); gap: 32px; margin-top: 33.200px; }
.reqs { margin-top: 54.600px; }
.label { height: 40px; margin-top: 37.400px; font-size: 25.200px; line-height: 40px; color: #6b6c70; }
.textarea {
  height: 144px;
  margin-top: 14px;
  border: 2px solid #262730;
  border-radius: 16px;
  background: #262730;
  overflow: hidden;
  position: relative;
}
.content {
  height: 140px;
  padding: 24px 24px 0;
  overflow: hidden;
  white-space: pre;
  line-height: 44.800px;
  letter-spacing: -0.25px;
  color: #77787c;
}
.content .ko { letter-spacing: 0.4px; }
.grip { position: absolute; right: 2px; bottom: 1px; }
.tree { margin-top: 52.400px; }
```
